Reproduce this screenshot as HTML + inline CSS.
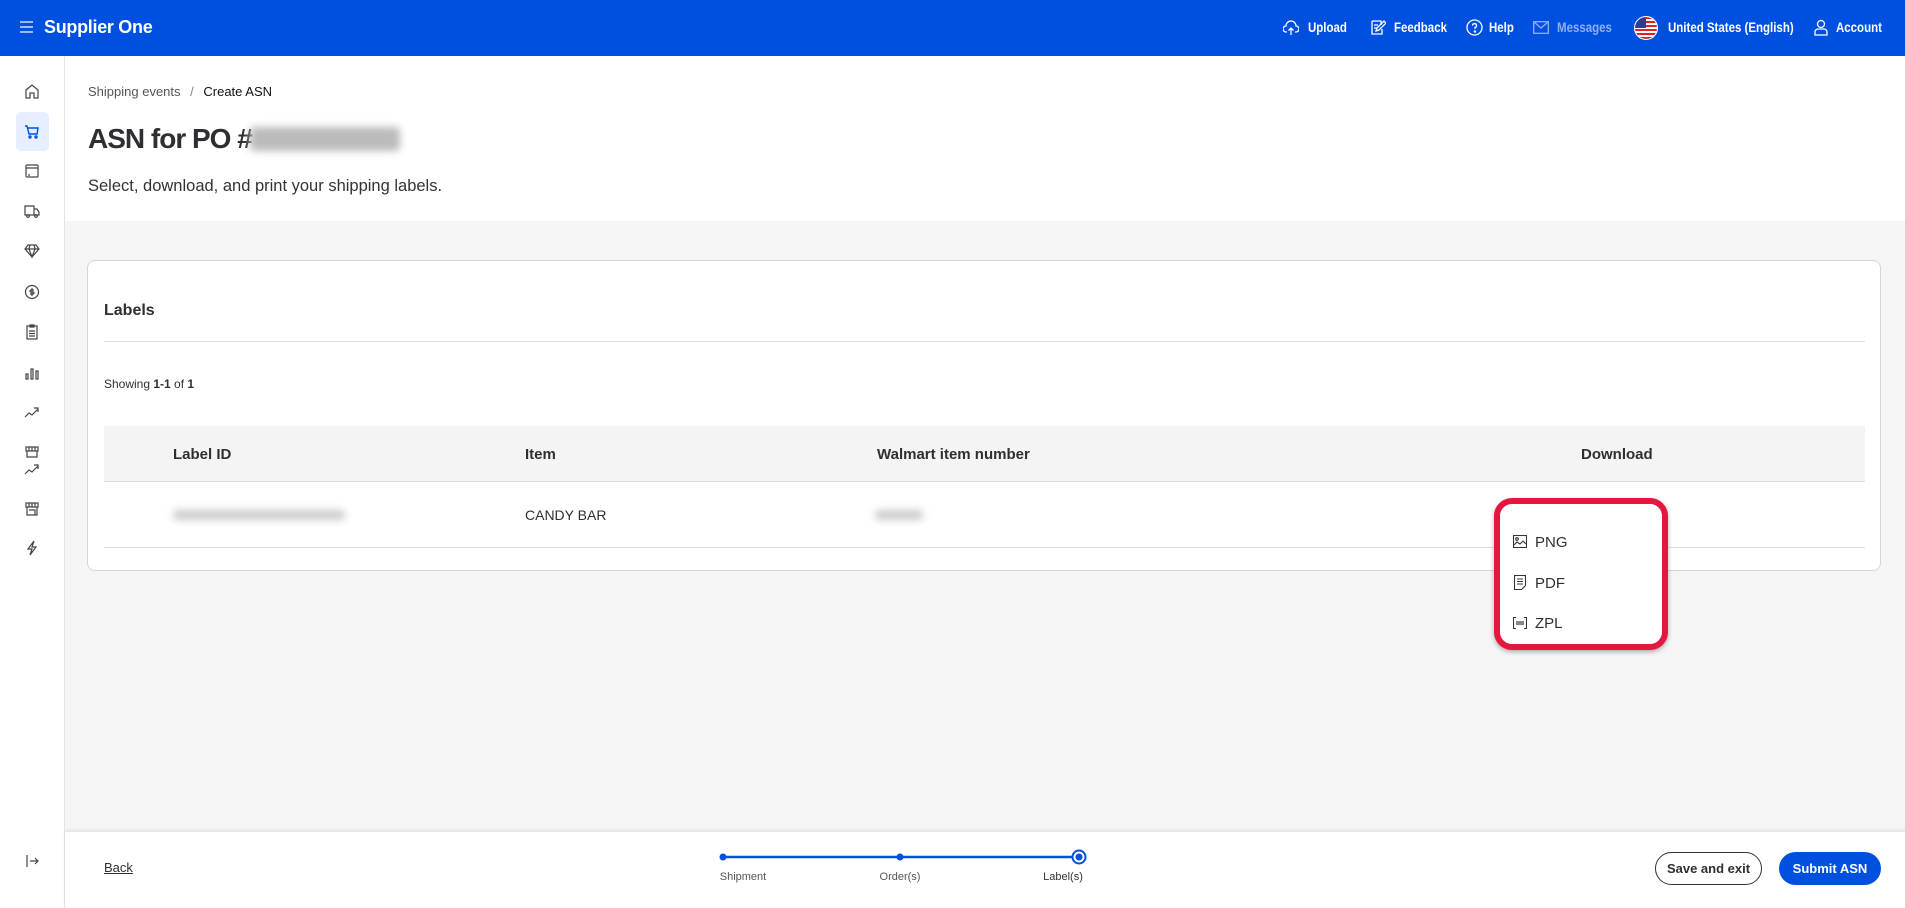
<!DOCTYPE html>
<html><head><meta charset="utf-8"><style>
*{box-sizing:border-box;margin:0;padding:0}
body{width:1905px;height:908px;overflow:hidden;font-family:"Liberation Sans",sans-serif;color:#2e2f32;background:#fff;position:relative}
.abs{position:absolute}
.hdr{left:0;top:0;width:1905px;height:56px;background:#0050e0;color:#fff}
.hdr .t{position:absolute;top:19px;font-size:14px;font-weight:bold;white-space:nowrap;transform:scaleX(.82);transform-origin:left}
.side{left:0;top:56px;width:65px;height:852px;background:#fff;border-right:1px solid #e3e4e5}
.ic{position:absolute;left:24px;width:16px;height:16px}
.gray{left:65px;top:221px;width:1840px;height:611px;background:#f5f5f6}
.card{left:87px;top:260px;width:1794px;height:311px;background:#fff;border:1px solid #d5d6d8;border-radius:8px}
.th{font-size:15px;font-weight:bold;position:absolute;top:446px}
.foot{left:65px;top:832px;width:1840px;height:76px;background:#fff;box-shadow:0 -2px 3px rgba(0,0,0,.08)}
.blur{background:#bbb;filter:blur(4px);border-radius:4px}
svg{display:block}
</style></head><body>
<div class="abs hdr">
 <svg class="abs" style="left:20px;top:21px" width="13" height="12"><path d="M0 1h13M0 6h13M0 11h13" stroke="#cfdcff" stroke-width="1.5"/></svg>
 <div class="t" style="left:44px;top:17px;font-size:18px;letter-spacing:-.3px;transform:none">Supplier One</div>
 <svg class="abs" style="left:1283px;top:20px" width="16" height="16" fill="none" stroke="#fff" stroke-width="1.3"><path d="M4 12H3a3 3 0 0 1 0-6 5 5 0 0 1 10 0 3 3 0 0 1 0 6h-1M8 15V8M5.5 10.5 8 8l2.5 2.5"/></svg>
 <div class="t" style="left:1308px">Upload</div>
 <svg class="abs" style="left:1370px;top:19px" width="16" height="17" fill="none" stroke="#fff" stroke-width="1.3"><path d="M2 2h9v4M2 2v13h10V10M4 6h4M4 9h3M6 12l1-3 7-7 2 2-7 7z"/></svg>
 <div class="t" style="left:1394px">Feedback</div>
 <svg class="abs" style="left:1466px;top:19px" width="17" height="17" fill="none" stroke="#fff" stroke-width="1.3"><circle cx="8.5" cy="8.5" r="7.5"/><path d="M6.5 6.5a2 2 0 1 1 2.5 2v1.5"/><circle cx="9" cy="12.5" r=".6" fill="#fff"/></svg>
 <div class="t" style="left:1489px">Help</div>
 <svg class="abs" style="left:1533px;top:21px" width="16" height="13" fill="none" stroke="#8fb0f5" stroke-width="1.3"><rect x=".7" y=".7" width="14.6" height="11.6"/><path d="M1 1l7 6 7-6"/></svg>
 <div class="t" style="left:1557px;color:#8fb0f5">Messages</div>
 <svg class="abs" style="left:1634px;top:16px" width="24" height="24"><defs><clipPath id="c"><circle cx="12" cy="12" r="11"/></clipPath></defs><g clip-path="url(#c)"><rect width="24" height="24" fill="#fff"/><path d="M0 2h24M0 6h24M0 10h24M0 14h24M0 18h24M0 22h24" stroke="#d22" stroke-width="2"/><rect width="12" height="12" fill="#2a3f8f"/></g><circle cx="12" cy="12" r="11.5" fill="none" stroke="#fff"/></svg>
 <div class="t" style="left:1668px">United States (English)</div>
 <svg class="abs" style="left:1814px;top:19px" width="14" height="17" fill="none" stroke="#fff" stroke-width="1.3"><circle cx="7" cy="5" r="3.5"/><path d="M1 16v-3a3 3 0 0 1 3-3h6a3 3 0 0 1 3 3v3z"/></svg>
 <div class="t" style="left:1836px">Account</div>
</div>
<div class="abs side">
 <div class="abs" style="left:16px;top:56px;width:33px;height:39px;background:#e5efff;border-radius:5px"></div>
 <svg class="ic" style="top:27px" viewBox="0 0 16 16" fill="none" stroke="#444" stroke-width="1.2"><path d="M2 7l6-5 6 5v8H10v-5H6v5H2z"/></svg>
 <svg class="ic" style="top:67px" viewBox="0 0 16 16" fill="none" stroke="#0050e0" stroke-width="1.4"><path d="M1 3h2l2 8h8l1-6H4"/><circle cx="6" cy="14" r="1"/><circle cx="12" cy="14" r="1"/></svg>
 <svg class="ic" style="top:107px" viewBox="0 0 16 16" fill="none" stroke="#444" stroke-width="1.2"><rect x="2" y="2" width="12" height="12" rx="1"/><path d="M2 5h12M4 12h2"/></svg>
 <svg class="ic" style="top:147px" viewBox="0 0 16 16" fill="none" stroke="#444" stroke-width="1.2"><path d="M1 3h9v9H1zM10 6h3l2 3v3h-5"/><circle cx="4" cy="13" r="1.3"/><circle cx="12" cy="13" r="1.3"/></svg>
 <svg class="ic" style="top:187px" viewBox="0 0 16 16" fill="none" stroke="#444" stroke-width="1.2"><path d="M4 2h8l3 4-7 8-7-8zM1 6h14M6 2 5 6l3 8 3-8-1-4"/></svg>
 <svg class="ic" style="top:228px" viewBox="0 0 16 16" fill="none" stroke="#444" stroke-width="1.2"><circle cx="8" cy="8" r="6.5"/><path d="M10 6H7a1 1 0 0 0 0 2h2a1 1 0 0 1 0 2H6M8 4v8"/></svg>
 <svg class="ic" style="top:268px" viewBox="0 0 16 16" fill="none" stroke="#444" stroke-width="1.2"><rect x="3" y="2" width="10" height="13"/><path d="M6 1h4v2H6zM5 7h6M5 9.5h6M5 12h6"/></svg>
 <svg class="ic" style="top:308px" viewBox="0 0 16 16" fill="none" stroke="#444" stroke-width="1.2"><path d="M2 10h2v5H2zM7 5h2v10H7zM12 7h2v8h-2z"/></svg>
 <svg class="ic" style="top:348px" viewBox="0 0 16 16" fill="none" stroke="#444" stroke-width="1.2"><path d="M1 13l4-4 3 2 6-6M10 4h4v4"/></svg>
 <svg class="ic" style="top:389px" viewBox="0 0 16 16" fill="none" stroke="#444" stroke-width="1.2"><path d="M2 2h12v4H2zM5 2v4M8 2v4M11 2v4M3 6v6h10V6"/></svg>
 <svg class="ic" style="top:405px" viewBox="0 0 16 16" fill="none" stroke="#444" stroke-width="1.2"><path d="M1 13l4-4 3 2 6-6M10 4h4v4"/></svg>
 <svg class="ic" style="top:445px" viewBox="0 0 16 16" fill="none" stroke="#444" stroke-width="1.2"><path d="M2 2h12v4H2zM5 2v4M8 2v4M11 2v4M3 6v8h10V6M5 9h6v5"/></svg>
 <svg class="ic" style="top:484px" viewBox="0 0 16 16" fill="none" stroke="#444" stroke-width="1.2"><path d="M10 1 4 9h4l-2 6 6-8H8z"/></svg>
 <svg class="ic" style="top:797px" viewBox="0 0 16 16" fill="none" stroke="#444" stroke-width="1.2"><path d="M3 2v12M6 8h8M11 5l3 3-3 3"/></svg>
</div>
<div class="abs" style="left:88px;top:84px;font-size:13px;color:#555">Shipping events <span style="margin:0 6px;color:#888">/</span> <span style="color:#111">Create ASN</span></div>
<div class="abs" style="left:88px;top:123px;font-size:28px;font-weight:bold;letter-spacing:-1px;color:#2e2f32">ASN for PO #</div>
<div class="abs blur" style="left:250px;top:127px;width:150px;height:24px"></div>
<div class="abs" style="left:88px;top:177px;font-size:16.5px;color:#333">Select, download, and print your shipping labels.</div>
<div class="abs gray"></div>
<div class="abs card"></div>
<div class="abs" style="left:104px;top:302px;font-size:16px;font-weight:bold">Labels</div>
<div class="abs" style="left:104px;top:341px;width:1761px;height:1px;background:#dcdde0"></div>
<div class="abs" style="left:104px;top:377px;font-size:12px">Showing <b>1-1</b> of <b>1</b></div>
<div class="abs" style="left:104px;top:426px;width:1761px;height:56px;background:#f4f4f5;border-bottom:1px solid #dcdde0"></div>
<div class="th" style="left:173px">Label ID</div>
<div class="th" style="left:525px">Item</div>
<div class="th" style="left:877px">Walmart item number</div>
<div class="th" style="left:1581px">Download</div>
<div class="abs blur" style="left:173px;top:510px;width:172px;height:10px;background:#ccc"></div>
<div class="abs" style="left:525px;top:507px;font-size:14px">CANDY BAR</div>
<div class="abs blur" style="left:875px;top:510px;width:48px;height:10px;background:#ccc"></div>
<div class="abs" style="left:104px;top:547px;width:1761px;height:1px;background:#dcdde0"></div>
<div class="abs" style="left:1494px;top:498px;width:174px;height:152px;background:#fff;border:6px solid #e5173f;border-radius:18px;box-shadow:0 2px 5px rgba(0,0,0,.3)">
 <svg class="abs" style="left:13px;top:31px" width="14" height="13" fill="none" stroke="#333" stroke-width="1.1"><rect x=".5" y=".5" width="13" height="12"/><circle cx="4" cy="4" r="1.3"/><path d="M1 10l3-3 3 2 3-3 3 3"/></svg>
 <div class="abs" style="left:35px;top:30px;font-size:15px">PNG</div>
 <svg class="abs" style="left:14px;top:71px" width="12" height="15" fill="none" stroke="#333" stroke-width="1.1"><path d="M.5.5h11v10l-4 4h-7zM3 4h6M3 6.5h6M3 9h6"/></svg>
 <div class="abs" style="left:35px;top:71px;font-size:15px">PDF</div>
 <svg class="abs" style="left:13px;top:113px" width="14" height="12" fill="none" stroke="#333" stroke-width="1.1"><path d="M3 .5H.5v11H3M11 .5h2.5v11H11"/><rect x="3" y="4" width="8" height="4" fill="#888" stroke="none"/></svg>
 <div class="abs" style="left:35px;top:111px;font-size:15px">ZPL</div>
</div>
<div class="abs foot"></div>
<div class="abs" style="left:104px;top:860px;font-size:13px;text-decoration:underline">Back</div>
<svg class="abs" style="left:715px;top:849px" width="372" height="18"><path d="M8 8H364" stroke="#0050e0" stroke-width="2.5"/><circle cx="8" cy="8" r="3.5" fill="#0050e0"/><circle cx="185" cy="8" r="3.5" fill="#0050e0"/><circle cx="364" cy="8" r="6.5" fill="#fff" stroke="#0050e0" stroke-width="2"/><circle cx="364" cy="8" r="3.5" fill="#0050e0"/></svg>
<div class="abs" style="left:713px;top:871px;width:60px;text-align:center;font-size:11px;color:#555">Shipment</div>
<div class="abs" style="left:870px;top:871px;width:60px;text-align:center;font-size:11px;color:#555">Order(s)</div>
<div class="abs" style="left:1033px;top:871px;width:60px;text-align:center;font-size:11px;color:#333">Label(s)</div>
<div class="abs" style="left:1655px;top:852px;width:107px;height:33px;border:1px solid #333;border-radius:17px;font-size:13px;font-weight:bold;text-align:center;line-height:31px">Save and exit</div>
<div class="abs" style="left:1779px;top:852px;width:102px;height:33px;background:#0050e0;color:#fff;border-radius:17px;font-size:13px;font-weight:bold;text-align:center;line-height:33px">Submit ASN</div>
</body></html>
